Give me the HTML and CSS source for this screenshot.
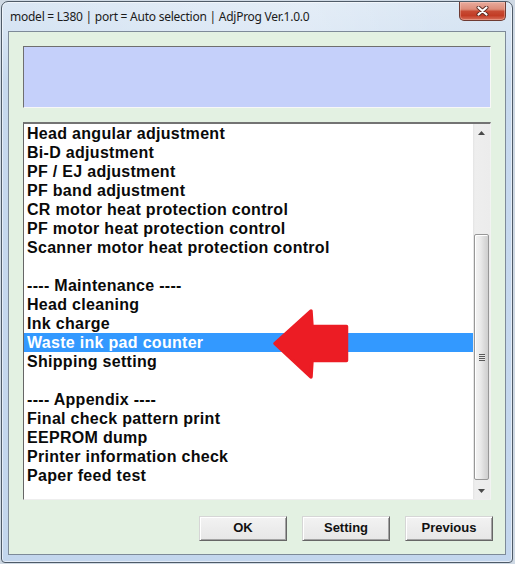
FILE: index.html
```html
<!DOCTYPE html>
<html>
<head>
<meta charset="utf-8">
<link rel="stylesheet" href="styles.css">
</head>
<body>
<div class="window">
  <div class="titlebar">
    <div class="title-text">model = L380 | port = Auto selection | AdjProg Ver.1.0.0</div>
    <div class="close-btn">
      <svg width="13" height="10" viewBox="0 0 13 10">
        <path d="M2.5,1.5 L10.5,8.5 M10.5,1.5 L2.5,8.5" stroke="#5a2a22" stroke-width="4" stroke-linecap="round"/>
        <path d="M2.5,1.5 L10.5,8.5 M10.5,1.5 L2.5,8.5" stroke="#ffffff" stroke-width="2.2" stroke-linecap="round"/>
      </svg>
    </div>
  </div>
  <div class="client">
    <div class="status-box"></div>
    <div class="listbox">
      <div class="items">
        <div class="item">Head angular adjustment</div>
        <div class="item">Bi-D adjustment</div>
        <div class="item">PF / EJ adjustment</div>
        <div class="item">PF band adjustment</div>
        <div class="item">CR motor heat protection control</div>
        <div class="item">PF motor heat protection control</div>
        <div class="item">Scanner motor heat protection control</div>
        <div class="item"></div>
        <div class="item">---- Maintenance ----</div>
        <div class="item">Head cleaning</div>
        <div class="item">Ink charge</div>
        <div class="item selected">Waste ink pad counter</div>
        <div class="item">Shipping setting</div>
        <div class="item"></div>
        <div class="item">---- Appendix ----</div>
        <div class="item">Final check pattern print</div>
        <div class="item">EEPROM dump</div>
        <div class="item">Printer information check</div>
        <div class="item">Paper feed test</div>
      </div>
      <div class="scrollbar">
        <div class="sb-btn"><svg width="7" height="4" viewBox="0 0 7 4"><path d="M0,4 L3.5,0 L7,4 Z" fill="#4a4a4a"/></svg></div>
        <div class="sb-track">
          <div class="sb-thumb">
            <div class="grip"></div>
          </div>
        </div>
        <div class="sb-btn"><svg width="7" height="4" viewBox="0 0 7 4"><path d="M0,0 L7,0 L3.5,4 Z" fill="#4a4a4a"/></svg></div>
      </div>
      <svg class="pointer-arrow" width="80" height="75" viewBox="0 0 80 75">
        <path d="M4,36.5 L40,4 L41,19.5 L75.5,19.5 L75.5,53.5 L41,53.5 L40,70 Z" fill="#ec1c24" stroke="#ec1c24" stroke-width="3.5" stroke-linejoin="round"/>
      </svg>
    </div>
    <div class="buttons">
      <div class="btn">OK</div>
      <div class="btn">Setting</div>
      <div class="btn">Previous</div>
    </div>
  </div>
</div>
</body>
</html>
```
FILE: styles.css
```css
html, body {
  margin: 0;
  padding: 0;
}
body {
  width: 515px;
  height: 564px;
  background: #cfd9e4;
  overflow: hidden;
}
.window {
  margin: 1px 0 0 1px;
  width: 512px;
  height: 562px;
  box-sizing: border-box;
  border: 1px solid #4f5b68;
  border-radius: 7px 7px 4px 4px;
  padding: 0 6px 7px 6px;
  background: linear-gradient(to bottom, #dbe7f4 0px, #d6e4f3 30px, #c7d9ee 80px, #c3d6ed 100%);
  box-shadow: inset 0 0 0 1px rgba(255,255,255,0.55);
}
.titlebar {
  display: flex;
  justify-content: space-between;
  align-items: flex-start;
  height: 29px;
  background: linear-gradient(to right, rgba(255,255,255,0) 0%, rgba(255,255,255,0.25) 60%, rgba(255,255,255,0.05) 85%, rgba(255,255,255,0) 100%);
}
.title-text {
  font-family: "Noto Sans", "Open Sans", sans-serif;
  font-size: 12px;
  letter-spacing: -0.25px;
  line-height: 29px;
  color: #1b1b1b;
  padding-left: 2px;
  white-space: nowrap;
}
.close-btn {
  width: 47px;
  height: 19px;
  box-sizing: border-box;
  border: 1px solid #6e3b33;
  border-top: none;
  border-radius: 0 0 5px 5px;
  background: linear-gradient(to bottom, #e9ab9d 0%, #dd8c79 40%, #c74a33 52%, #c23c25 75%, #d8705b 100%);
  box-shadow: inset 0 0 0 1px rgba(255,220,210,0.35);
  display: flex;
  align-items: center;
  justify-content: center;
}
.client {
  height: 524px;
  box-sizing: border-box;
  border: 1px solid #7d8a98;
  background: #e3f1e2;
  padding: 14px 14px 13px 14px;
  display: flex;
  flex-direction: column;
}
.status-box {
  height: 62px;
  box-sizing: border-box;
  border: 1px solid;
  border-color: #6f6f6f #f7f7f7 #f7f7f7 #6f6f6f;
  background: #c5d0fa;
  margin-bottom: 14px;
}
.listbox {
  position: relative;
  height: 378px;
  box-sizing: border-box;
  border-style: solid;
  border-width: 2px 1px 1px 1px;
  border-color: #737373 #f2f2f2 #eeeeee #666666;
  background: #ffffff;
  display: flex;
}
.items {
  flex: 1;
  font-family: "Liberation Sans", Arial, sans-serif;
  font-weight: bold;
  font-size: 16px;
  letter-spacing: 0.3px;
  line-height: 19px;
  color: #0a0a0a;
}
.item {
  height: 19px;
  padding-left: 3px;
  white-space: nowrap;
  overflow: hidden;
}
.item.selected {
  background: #3399ff;
  color: #ffffff;
}
.scrollbar {
  width: 17px;
  display: flex;
  flex-direction: column;
  background: linear-gradient(to right, #e4e4e4 0px, #eeeeee 2px, #ececec 100%);
}
.sb-btn {
  height: 17px;
  display: flex;
  align-items: center;
  justify-content: center;
}
.sb-track {
  flex: 1;
  padding-top: 93px;
  padding-bottom: 2px;
  display: flex;
  flex-direction: column;
}
.sb-thumb {
  flex: 1;
  margin: 0 1px;
  box-sizing: border-box;
  border: 1px solid #979797;
  border-radius: 2px;
  background: linear-gradient(to right, #f4f4f4 0%, #e9e9e9 45%, #d9d9d9 75%, #cfcfcf 100%);
  box-shadow: inset 1px 1px 0 #ffffff;
  display: flex;
  align-items: center;
  justify-content: center;
}
.grip {
  width: 6px;
  height: 7px;
  background: repeating-linear-gradient(to bottom, #5a5a5a 0px, #5a5a5a 1px, #e8e8e8 1px, #e8e8e8 2px);
}
.pointer-arrow {
  position: absolute;
  left: 247px;
  top: 183px;
}
.buttons {
  display: flex;
  justify-content: flex-end;
  gap: 15px;
  margin-top: 16px;
  margin-right: -2px;
}
.btn {
  width: 88px;
  height: 25px;
  box-sizing: border-box;
  border: 1px solid;
  border-color: #d6d6d6 #666666 #666666 #d6d6d6;
  box-shadow: inset 1px 1px 0 #ffffff, inset -1px -1px 0 #a3a3a3;
  background: linear-gradient(to bottom, #f3f3f3 0%, #ececec 50%, #e7e7e7 100%);
  font-family: "Liberation Sans", Arial, sans-serif;
  font-weight: bold;
  font-size: 13px;
  line-height: 22px;
  text-align: center;
  color: #111111;
}
```
